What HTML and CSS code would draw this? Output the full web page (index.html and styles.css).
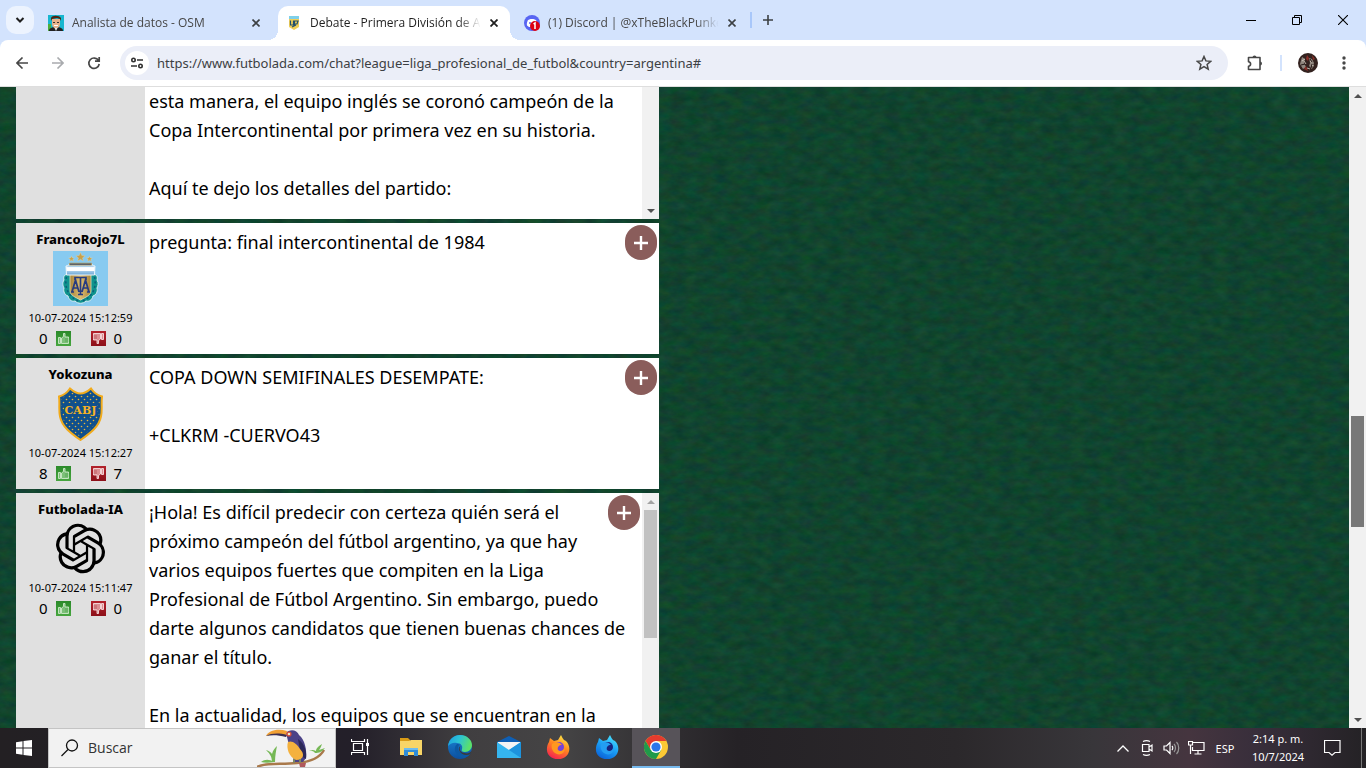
FILE: index.html
```html
<!DOCTYPE html>
<html lang="es">
<head>
<meta charset="utf-8">
<title>Debate - Primera División de Argentina</title>
<link rel="stylesheet" href="styles.css">
</head>
<body>
<svg class="defs" aria-hidden="true">
  <defs>
    <linearGradient id="gThumbUp" x2="0" y2="1"><stop offset="0" stop-color="#2b8a2a"/><stop offset="1" stop-color="#47a63f"/></linearGradient>
    <linearGradient id="gThumbDown" x2="0" y2="1"><stop offset="0" stop-color="#b3222c"/><stop offset="1" stop-color="#8c1019"/></linearGradient>
    <linearGradient id="gGold" x2="1"><stop offset="0" stop-color="#a8843a"/><stop offset=".5" stop-color="#dcbd70"/><stop offset="1" stop-color="#a8843a"/></linearGradient>
    <linearGradient id="gSky" x2="0" y2="1"><stop offset="0" stop-color="#cfe4f3"/><stop offset=".3" stop-color="#a4cbe8"/><stop offset=".32" stop-color="#fff"/><stop offset=".6" stop-color="#fff"/><stop offset=".62" stop-color="#a9cfec"/><stop offset="1" stop-color="#6aa5d4"/></linearGradient>
    <linearGradient id="gEdgeA" x2="1" y2=".3"><stop offset="0" stop-color="#1b9de2"/><stop offset=".5" stop-color="#2cc3d5"/><stop offset="1" stop-color="#5be06a"/></linearGradient>
    <linearGradient id="gEdgeB" x2="0" y2="1"><stop offset="0" stop-color="#1b86d6"/><stop offset="1" stop-color="#0c4f9e"/></linearGradient>
    <linearGradient id="gFox" x1=".8" x2=".3" y2="1"><stop offset="0" stop-color="#fff04a"/><stop offset=".45" stop-color="#ff8a1f"/><stop offset="1" stop-color="#f5214f"/></linearGradient>
    <linearGradient id="gFoxBlue" x1=".8" x2=".3" y2="1"><stop offset="0" stop-color="#4ee8ff"/><stop offset=".5" stop-color="#1ba0f5"/><stop offset="1" stop-color="#0a62d8"/></linearGradient>
    <pattern id="dots" width="6" height="6" patternUnits="userSpaceOnUse"><circle cx="1.500" cy="1.500" r=".8" fill="#e8b63a"/><circle cx="4.500" cy="4.500" r=".8" fill="#e8b63a"/></pattern>
    <filter id="turf" x="0" y="0" width="100%" height="100%" color-interpolation-filters="sRGB">
      <feTurbulence type="fractalNoise" baseFrequency=".07 .13" numOctaves="4" seed="8"/>
      <feColorMatrix values=".10 0 0 0 .015  0 .12 0 0 .205  0 0 .10 0 .130  0 0 0 0 1"/>
    </filter>
    <symbol id="up" viewBox="0 0 15 15"><path fill="url(#gThumbUp)" d="M0 0h15v15H0z"/><path fill="#7cc078" stroke="#cfeacb" stroke-width=".9" d="M2.500 6.500h2v6h-2zM5.500 7l2-1.500V2.500h1.500v3.500h3.500v6.500h-7z"/><path stroke="#4b9e48" stroke-width=".7" d="M9 8h3.500M9 10h3.500"/></symbol>
    <symbol id="down" viewBox="0 0 15 15"><path fill="url(#gThumbDown)" d="M0 0h15v15H0z"/><path fill="#dc8f93" stroke="#f7dedf" stroke-width=".9" d="M10.500 2.500h2v6h-2zM9.500 8l-2 1.500v3H6V9H2.500V2.500h7z"/><path stroke="#b04950" stroke-width=".7" d="M2.500 5H6M2.500 7H6"/></symbol>
  </defs>
</svg>

<header class="tabstrip">
  <button class="tab-search" aria-label="Buscar pestañas"><svg width="10" height="8" viewBox="0 0 10 8"><path d="M1.500 2L5 5.500 8.500 2" fill="none" stroke="#1f1f1f" stroke-width="2"/></svg></button>
  <nav class="tabs" aria-label="Pestañas">
    <div class="tab">
      <svg class="fav" viewBox="0 0 16 16"><path fill="#17b6cf" d="M0 0h16v16H0z"/><path fill="#4cae3c" d="M0 9h3v7H0z"/><path fill="#222" d="M1 16c0-3 3-4 7-4s7 1 7 4z"/><path fill="#e9e9e9" d="M6 12h4l-2 4z"/><path fill="#e9b28b" d="M4 4h8v5c0 3-2 4-4 4s-4-1-4-4z"/><path fill="#4d2413" d="M3 6V3c1-3 8-3 10 0v3l-1-2-3-1-5 1z"/><path fill="#333" d="M5 7h2v1H5zM9 7h2v1H9z"/><path stroke="#fff" d="M6 10.500h4"/></svg>
      <a class="tab-title" href="#">Analista de datos - OSM</a>
      <button class="tab-close" aria-label="Cerrar"><svg width="8" height="8" viewBox="0 0 8 8"><path d="M.5.5l7 7m0-7l-7 7" stroke="#3c4043" stroke-width="1.600"/></svg></button>
    </div>
    <div class="tab active">
      <svg class="fav" viewBox="0 0 16 16"><path fill="#7fd0ea" d="M3 1h10v3H3z"/><path fill="#f2cf57" d="M3 4h10v8l-5 3-5-3z"/><path fill="none" stroke="#24506b" stroke-width="1.200" d="M4.500 5.500v4.500h3V5.500M8.500 11V6H12L11 9H9M6 12l4-2"/></svg>
      <a class="tab-title" href="#">Debate - Primera División de Ar</a>
      <button class="tab-close" aria-label="Cerrar"><svg width="8" height="8" viewBox="0 0 8 8"><path d="M.5.5l7 7m0-7l-7 7" stroke="#1f1f1f" stroke-width="1.800"/></svg></button>
    </div>
    <div class="tab">
      <svg class="fav" viewBox="0 0 16 16"><circle cx="8" cy="8" r="8" fill="#5865f2"/><path fill="#fff" d="M4 5c2-1.500 6-1.500 8 0 1 2 1.500 4 1 5.500L11 12H5l-2-1.500C2.500 9 3 7 4 5z"/><circle cx="6" cy="8" r="1" fill="#5865f2"/><circle cx="11" cy="11" r="5" fill="#dc0014"/><path fill="none" stroke="#fff" stroke-width="1.500" d="M9.500 9l1.500-1v6"/></svg>
      <a class="tab-title" href="#">(1) Discord | @xTheBlackPunked</a>
      <button class="tab-close" aria-label="Cerrar"><svg width="8" height="8" viewBox="0 0 8 8"><path d="M.5.5l7 7m0-7l-7 7" stroke="#3c4043" stroke-width="1.600"/></svg></button>
    </div>
  </nav>
  <span class="tab-sep"></span>
  <button class="new-tab" aria-label="Nueva pestaña"><svg width="10" height="10" viewBox="0 0 10 10"><path d="M5 0v10M0 5h10" stroke="#3c4043" stroke-width="1.600"/></svg></button>
  <div class="window-controls">
    <button aria-label="Minimizar"><svg width="10" height="10" viewBox="0 0 10 10"><path d="M0 5.500h10" stroke="#000"/></svg></button>
    <button aria-label="Restaurar"><svg width="10" height="10" viewBox="0 0 10 10"><path d="M.5 2.500h7v7h-7zM2.500 2.500v-2h7v7h-2" fill="none" stroke="#000"/></svg></button>
    <button aria-label="Cerrar ventana"><svg width="10" height="10" viewBox="0 0 10 10"><path d="M0 0l10 10M10 0L0 10" stroke="#000" stroke-width="1.100"/></svg></button>
  </div>
</header>

<div class="toolbar-bg">
<div class="toolbar">
  <button class="tool" aria-label="Atrás"><svg width="12" height="12" viewBox="0 0 12 12"><path d="M6.500.5L1 6l5.500 5.500M1 6h11" fill="none" stroke="#474747" stroke-width="1.600"/></svg></button>
  <button class="tool" aria-label="Adelante"><svg width="12" height="12" viewBox="0 0 12 12"><path d="M5.500.5L11 6l-5.500 5.500M11 6H0" fill="none" stroke="#a9abae" stroke-width="1.600"/></svg></button>
  <button class="tool" aria-label="Recargar"><svg width="14" height="14" viewBox="0 0 14 14"><path d="M11.500 4.500A5.200 5.200 0 1 0 12.200 8M12.200 1v4.200H8" fill="none" stroke="#474747" stroke-width="1.700"/></svg></button>
  <div class="omnibox">
    <button class="site-info" aria-label="Información del sitio"><svg width="12" height="12" viewBox="0 0 12 12"><g fill="none" stroke="#303030" stroke-width="1.600"><circle cx="2.500" cy="3" r="1.700"/><path d="M6 3h6M0 9h6"/><circle cx="9.500" cy="9" r="1.700"/></g></svg></button>
    <input class="url" aria-label="Dirección" value="https://www.futbolada.com/chat?league=liga_profesional_de_futbol&amp;country=argentina#">
    <button class="star" aria-label="Marcador"><svg width="16" height="16" viewBox="0 0 16 16"><path d="M8 1.500l1.900 4.400 4.800.4-3.600 3.200 1.100 4.700L8 11.700l-4.200 2.500 1.100-4.700L1.300 6.300l4.800-.4z" fill="none" stroke="#474747" stroke-width="1.500"/></svg></button>
  </div>
  <button class="puzzle" aria-label="Extensiones"><svg width="18" height="18" viewBox="0 0 18 18"><path d="M2.500 3.500h11.500v12H2.500v-3.300c2.800-.3 2.800-4.100 0-4.400z" fill="none" stroke="#474747" stroke-width="1.600" stroke-linejoin="round"/><path fill="#474747" d="M6.500 3.500a2 2 0 0 1 4 0zM14 7.500a2 2 0 0 1 0 4z"/></svg></button>
  <span class="tool-sep"></span>
  <button class="avatar" aria-label="Perfil"><svg width="20" height="20" viewBox="0 0 20 20"><circle cx="10" cy="10" r="10" fill="#33221f"/><path fill="#8f867e" d="M4 4l3 2-1 4 2 4-3 2-3-5zM11 5l3 1 2 4-2 6-3-3 1-3z"/><path fill="#8b2e27" d="M9 2l2 3-1 3-2-2zM14 2l3 4-2 1zM8 13l2 5-4-2z"/><path stroke="#ddd4c8" stroke-width=".8" d="M6 8l2 3M12 8l2 1M9 15l3 1M4 8l3-2M13 12l3 1"/><path stroke="#221513" d="M3 12l4-1M12 6l2 3M14 11l-1 4"/></svg></button>
  <button class="menu" aria-label="Menú"><svg width="4" height="14" viewBox="0 0 4 14" fill="#474747"><circle cx="2" cy="2" r="1.700"/><circle cx="2" cy="7" r="1.700"/><circle cx="2" cy="12" r="1.700"/></svg></button>
</div>
</div>

<div class="viewport">
  <main class="page">
    <svg class="turf" aria-hidden="true"><rect width="100%" height="100%" filter="url(#turf)"/></svg>
    <section class="feed">
      <article class="post first">
        <aside class="author"></aside>
        <div class="body"><p>esta manera, el equipo inglés se coronó campeón de la<br>Copa Intercontinental por primera vez en su historia.</p><p>Aquí te dejo los detalles del partido:</p></div>
        <div class="scroll"><i class="thumb-space"></i><i class="arrow down"></i></div>
      </article>

      <article class="post">
        <aside class="author">
          <h2>FrancoRojo7L</h2>
          <svg class="crest" viewBox="0 0 55 55"><path fill="#87caf0" d="M0 0h55v55H0z"/><g fill="#c9a047" stroke="#e3d3a8" stroke-width=".4"><path d="M27.500 1.500l1.300 3 3.200.3-2.500 2.100.8 3.100-2.800-1.700-2.800 1.700.8-3.100L23 4.800l3.200-.3zM18.500 5l.8 1.900 2 .1-1.500 1.300.5 2-1.800-1.100-1.800 1.100.5-2L15.700 7l2-.1zM36.500 5l.8 1.900 2 .1-1.500 1.300.5 2-1.800-1.100-1.800 1.100.5-2-1.500-1.300 2-.1z"/></g><path fill="#0e938d" stroke="#d9edf4" d="M16 23c-5 0-6 3-5 6-2 3-1 6 0 8-1 4 1 7 4 8 1 4 4 6 7 5 3 3 8 3 11 0 3 1 6-1 7-5 3-1 5-4 4-8 1-2 2-5 0-8 1-3 0-6-5-6z"/><g fill="none" stroke="#0a5f78" stroke-width="1.500" stroke-dasharray="2 2.500"><path d="M13.500 26c-2 8 0 19 12 24M41.500 26c2 8 0 19-12 24"/></g><path fill="url(#gGold)" stroke="#e4dcbd" stroke-width=".8" d="M17 23h21v17c0 4-5 6-10.500 9C22 46 17 44 17 40z"/><path fill="url(#gSky)" stroke="#eef6fb" d="M16 13h23c0 1 1 2 3 2l-.5 9h-28L13 15c2 0 3-1 3-2z"/><path fill="#233f78" stroke="#b99a50" stroke-width=".8" d="M16.500 12.200h22v1.800h-22z"/><g fill="none" stroke="#263b80" stroke-width="1.700"><path d="M19 41l3.500-12L26 41M20 37h5M29 41l3.500-12L36 41M30 37h5M22 29v-2.500h11V29M27.500 27v16M25 43.500h5M18 41h3M34 41h3"/></g></svg>
          <time>10-07-2024 15:12:59</time>
          <div class="votes"><span>0</span><button aria-label="Me gusta"><svg><use href="#up"/></svg></button><button class="no" aria-label="No me gusta"><svg><use href="#down"/></svg></button><span>0</span></div>
        </aside>
        <div class="body"><p>pregunta: final intercontinental de 1984</p></div>
        <button class="plus" aria-label="Responder"><svg width="16" height="16" viewBox="0 0 16 16"><path d="M8 1v14M1 8h14" stroke="#fff" stroke-width="2.400"/></svg></button>
      </article>

      <article class="post">
        <aside class="author">
          <h2>Yokozuna</h2>
          <svg class="crest" viewBox="0 0 55 55"><path fill="#10508c" stroke="#f1ab1c" stroke-width="2" d="M17 2.500c4 3.500 8 5 10.500 5S34 6 38 2.500c3 4.500 7 7 11 8-1 7 .5 13-1 20-2 10-10 16-20.500 23.500C17 46.500 9 40.500 7 30.500c-1.500-7 0-13-1-20 4-1 8-3.500 11-8z"/><path fill="url(#dots)" d="M17 5c4 3 8 4.500 10.500 4.500S34 8 38 5c3 4 6 6 9 7-1 6 .5 12-1 18-2 8-9 14-18.500 21C18 44 11 38 9 30c-1.500-6 0-12-1-18 3-1 6-3 9-7z"/><path fill="#10508c" d="M11 17h33v13H11z"/><text class="club" x="27.500" y="28" text-anchor="middle">CABJ</text></svg>
          <time>10-07-2024 15:12:27</time>
          <div class="votes"><span>8</span><button aria-label="Me gusta"><svg><use href="#up"/></svg></button><button class="no" aria-label="No me gusta"><svg><use href="#down"/></svg></button><span>7</span></div>
        </aside>
        <div class="body"><p>COPA DOWN SEMIFINALES DESEMPATE:</p><p>+CLKRM -CUERVO43</p></div>
        <button class="plus" aria-label="Responder"><svg width="16" height="16" viewBox="0 0 16 16"><path d="M8 1v14M1 8h14" stroke="#fff" stroke-width="2.400"/></svg></button>
      </article>

      <article class="post last">
        <aside class="author">
          <h2>Futbolada-IA</h2>
          <svg class="crest" viewBox="-1.300 -1.300 26.600 26.600"><path d="M22.282 9.821a5.985 5.985 0 0 0-.516-4.910 6.046 6.046 0 0 0-6.510-2.900A6.065 6.065 0 0 0 4.981 4.182a5.985 5.985 0 0 0-3.998 2.900 6.046 6.046 0 0 0 .743 7.097 5.980 5.980 0 0 0 .510 4.911 6.051 6.051 0 0 0 6.515 2.900A5.985 5.985 0 0 0 13.260 24a6.056 6.056 0 0 0 5.772-4.206 5.990 5.990 0 0 0 3.998-2.900 6.056 6.056 0 0 0-.747-7.073zM13.260 22.430a4.476 4.476 0 0 1-2.876-1.040l.141-.081 4.779-2.758a.795.795 0 0 0 .393-.681v-6.737l2.020 1.169a.071.071 0 0 1 .038.052v5.583a4.504 4.504 0 0 1-4.495 4.494zM3.600 18.304a4.471 4.471 0 0 1-.535-3.014l.142.085 4.783 2.759a.771.771 0 0 0 .780 0l5.843-3.369v2.332a.080.080 0 0 1-.033.062L9.740 19.950a4.499 4.499 0 0 1-6.140-1.646zM2.341 7.896a4.485 4.485 0 0 1 2.365-1.973V11.600a.766.766 0 0 0 .388.677l5.814 3.354-2.020 1.169a.076.076 0 0 1-.071 0l-4.830-2.787A4.504 4.504 0 0 1 2.341 7.872zm16.597 3.855l-5.834-3.387 2.016-1.164a.076.076 0 0 1 .071 0l4.830 2.791a4.494 4.494 0 0 1-.677 8.104v-5.677a.790.790 0 0 0-.406-.667zm2.010-3.023l-.141-.085-4.774-2.782a.776.776 0 0 0-.785 0L9.409 9.230V6.897a.066.066 0 0 1 .028-.061l4.830-2.787a4.499 4.499 0 0 1 6.681 4.660zM8.307 12.863l-2.020-1.164a.080.080 0 0 1-.038-.057V6.075a4.499 4.499 0 0 1 7.376-3.454l-.142.081-4.778 2.758a.795.795 0 0 0-.393.681zm1.097-2.366l2.602-1.500 2.607 1.500v3l-2.597 1.500-2.607-1.500z"/></svg>
          <time>10-07-2024 15:11:47</time>
          <div class="votes"><span>0</span><button aria-label="Me gusta"><svg><use href="#up"/></svg></button><button class="no" aria-label="No me gusta"><svg><use href="#down"/></svg></button><span>0</span></div>
        </aside>
        <div class="body"><p>¡Hola! Es difícil predecir con certeza quién será el<br>próximo campeón del fútbol argentino, ya que hay<br>varios equipos fuertes que compiten en la Liga<br>Profesional de Fútbol Argentino. Sin embargo, puedo<br>darte algunos candidatos que tienen buenas chances de<br>ganar el título.</p><p>En la actualidad, los equipos que se encuentran en la</p></div>
        <div class="scroll"><i class="arrow up faded"></i><i class="thumb-inner"></i></div>
        <button class="plus beside-scroll" aria-label="Responder"><svg width="16" height="16" viewBox="0 0 16 16"><path d="M8 1v14M1 8h14" stroke="#fff" stroke-width="2.400"/></svg></button>
      </article>
    </section>
  </main>
  <div class="scroll page-scroll"><i class="arrow up"></i><div class="track"><i class="before"></i><i class="thumb-page"></i><i class="after"></i></div><i class="arrow down"></i></div>
</div>

<footer class="taskbar">
  <button class="start" aria-label="Inicio"><svg width="16" height="16" viewBox="0 0 16 16" fill="#fff"><path d="M0 2.200L6.500 1.300v6.200H0zM7.500 1.100L16 0v7.500H7.500zM0 8.500h6.500v6.200L0 13.800zM7.500 8.500H16V16l-8.500-1.100z"/></svg></button>
  <label class="search">
    <svg width="18" height="18" viewBox="0 0 18 18"><circle cx="11" cy="6.500" r="5.500" fill="none" stroke="#111" stroke-width="1.300"/><path d="M7 10.500L.5 17" stroke="#111" stroke-width="1.300"/></svg>
    <input type="search" aria-label="Buscar" placeholder="Buscar">
    <svg class="toucan" width="70" height="38" viewBox="0 0 70 38"><path d="M0 38c10-5 24-2 40-4 12-1 22-4 27-13" fill="none" stroke="#a9794b" stroke-width="2.500"/><path d="M15 33c0-6-3-9-6-12 3 1 5 2 6 4 1-4 3-6 5-8-1 5-2 10-2 16zM4 33c4-3 8-3 13 0-5 1-9 1-13 0zM59 22c0-3 3-5 6-7-1 3-2 5-3 6l6-2c-3 4-6 5-10 5-2-3-6-2-6-2s3-2 7 0z" fill="#76b856"/><path fill="#4b4287" d="M29 4c3-4 11-4 13 2 6 5 8 15 7 23l-3 4h-8l-4-9z"/><path fill="#2c2858" d="M41 10c7 5 9 13 8 20l-5-3z"/><path fill="#f4b13e" d="M31 13c4-2 9 2 12 7 5 5 4 11-4 11-7-3-10-12-8-18z"/><path fill="#f1a033" d="M30 2C20-1 11 2 9 7c6-2 13-2 20 0z"/><path fill="#3b2f52" d="M9 7c6-3 13-3 21-1l-1 2C21 6 15 6 9 7z"/><circle cx="32" cy="5" r="2.600" fill="#d34a35"/><circle cx="32" cy="5" r="1.300" fill="#eee7d0"/><path fill="#b0585c" d="M42 34h7l-1 4h-5z"/><path stroke="#7e8765" stroke-width="2" d="M37 30v4M43 30v4"/></svg>
  </label>
  <nav class="apps" aria-label="Aplicaciones">
    <button class="task-view" aria-label="Vista de tareas"><svg width="18" height="16" viewBox="0 0 18 16"><path d="M2.500 4.500h9v7h-9zM.5 0v2.500h13V0M.5 16v-2.500h13V16M16.500 0v16" fill="none" stroke="#fff" stroke-width="1.200"/><path fill="#fff" d="M15 4h3v3h-3z"/></svg></button>
    <button aria-label="Explorador"><svg width="22" height="18" viewBox="0 0 22 18"><path fill="#d99b16" d="M0 0h8l2 2v3H0z"/><path fill="#f8d567" d="M0 3h9l2-1h11v15H0z"/><path fill="#2f8bd6" d="M4 18v-8h14v8h-4v-4H8v4z"/><path fill="#6ebced" d="M4 10h14v2H4z"/></svg></button>
    <button aria-label="Edge"><svg width="24" height="24" viewBox="0 0 24 24"><circle cx="12" cy="12" r="12" fill="url(#gEdgeB)"/><path fill="url(#gEdgeA)" d="M0 11C1 4 6 0 12 0c7 0 12 5 12 10 0 4-3 7-7 7-3 0-4-1-3-3 1-3-1-6-5-6-4-1-7 1-9 3z"/><path fill="#0c59a4" d="M9 9c-4 3-3 12 7 14 3-1 6-3 7-5-7 3-13 0-13-5 0-2 1-3 2-3-1-1-2-1-3-1z"/><path fill="#3a393b" d="M12.500 11c-2 3 0 7 4 7 3 1 5 0 7-2l-1 3c-4 2-9 1-11-3-1-2-1-4 1-5z"/></svg></button>
    <button aria-label="Correo"><svg width="24" height="22" viewBox="0 0 24 22"><path fill="#0f5fb4" d="M0 6l12-6 12 6v4H0z"/><path fill="#f4f4f4" d="M1 6h22v8H1z"/><path fill="#35b5ef" d="M0 6l12 8 12-8v16H0z"/><path fill="#1d93dd" d="M24 6v16L12 14z"/></svg></button>
    <button aria-label="Firefox"><svg width="24" height="24" viewBox="0 0 24 24"><path fill="url(#gFox)" d="M3 7l1-4 4 3 4-1 3-5c1 2 2 4 3 5l2 1c4 4 4 9 2 13-4 7-16 7-20 0-2-4-1-9 1-12z"/><circle cx="13" cy="12" r="5" fill="#7543d8"/><path fill="#ff981f" d="M6 9c4-3 8-2 10 1-3 0-5 2-4 5 2 2 5 1 7-2 0 6-6 8-10 5-3-2-4-6-3-9z"/></svg></button>
    <button aria-label="Firefox Developer Edition"><svg width="24" height="24" viewBox="0 0 24 24"><path fill="url(#gFoxBlue)" d="M3 7l1-4 4 3 4-1 3-5c1 2 2 4 3 5l2 1c4 4 4 9 2 13-4 7-16 7-20 0-2-4-1-9 1-12z"/><circle cx="13" cy="12" r="5" fill="#17237e"/><path fill="#239df2" d="M6 9c4-3 8-2 10 1-3 0-5 2-4 5 2 2 5 1 7-2 0 6-6 8-10 5-3-2-4-6-3-9z"/></svg></button>
    <button class="current" aria-label="Chrome"><svg width="24" height="24" viewBox="0 0 24 24"><circle cx="12" cy="12" r="12" fill="#fcc934"/><path fill="#e33b2e" d="M1.600 6A12 12 0 0 1 22.400 6H12l-5.200 9z"/><path fill="#209a4b" d="M1.600 6A12 12 0 0 0 12 24l5.200-9H6.800z"/><circle cx="12" cy="12" r="6" fill="#fff"/><circle cx="12" cy="12" r="4.600" fill="#2c76e8"/></svg></button>
  </nav>
  <div class="tray">
    <button aria-label="Mostrar iconos ocultos"><svg width="12" height="7" viewBox="0 0 12 7"><path d="M.5 6.500L6 1l5.500 5.500" fill="none" stroke="#fff" stroke-width="1.300"/></svg></button>
    <button aria-label="Cámara"><svg width="12" height="16" viewBox="0 0 12 16"><path d="M1.500 4.500h6.500v7H1.500zM8 7l3-2v6L8 9M2 1.500c2-1 5-1 7 0M2 14.500c2 1 5 1 7 0" fill="none" stroke="#fff" stroke-width="1.200"/></svg></button>
    <button aria-label="Volumen"><svg width="17" height="14" viewBox="0 0 17 14" fill="none" stroke="#fff" stroke-width="1.200"><path d="M1 5h2.500L7 1.500v11L3.500 9H1zM9 5c1 1 1 3 0 4"/><path stroke="#999" d="M11 3c2 2 2 6 0 8M13.500 1c3 3 3 9 0 12"/></svg></button>
    <button class="net" aria-label="Red"><svg width="17" height="14" viewBox="0 0 17 14"><path d="M5 1.500h11v8H4.500V6M10 9.500v3M6.500 13h7M.5.500h4v3.500h-4zM2.500 4v9" fill="none" stroke="#fff" stroke-width="1.200"/></svg></button>
    <button class="lang">ESP</button>
    <button class="clock">2:14 p. m.<br>10/7/2024</button>
    <button class="notes" aria-label="Notificaciones"><svg width="17" height="16" viewBox="0 0 17 16"><path d="M.5.500h15.500v12H11l-3 2.700-3-2.700H.5z" fill="none" stroke="#fff" stroke-width="1.200"/></svg></button>
    <span class="peek"></span>
  </div>
</footer>
</body>
</html>
```

FILE: styles.css
```css
* { box-sizing: border-box; }

body {
  margin: 0;
  height: 100vh;
  display: flex;
  flex-direction: column;
  overflow: hidden;
  font-family: "Noto Sans", "Open Sans", sans-serif;
  color: #000;
}

button {
  padding: 0;
  border: 0;
  background: none;
  font: inherit;
  color: inherit;
  display: flex;
  align-items: center;
  justify-content: center;
}

svg { display: block; flex: none; }
.defs { position: absolute; width: 0; height: 0; }

/* Tab strip */
.tabstrip {
  flex: none;
  height: 40px;
  display: flex;
  align-items: center;
  padding-left: 6px;
  background: #d3e3fd;
}
.tab-search { width: 28px; height: 28px; border-radius: 10px; background: #ecf3fe; }
.tabs { display: flex; align-self: flex-end; gap: 6px; margin-left: 6px; }
.tab {
  width: 232px;
  height: 34px;
  display: flex;
  align-items: center;
  padding: 0 8px;
  position: relative;
  border-radius: 10px 10px 0 0;
}
.tab.active { background: #fff; }
.tab.active::before,
.tab.active::after {
  content: "";
  position: absolute;
  bottom: 0;
  width: 10px;
  height: 10px;
}
.tab.active::before { left: -10px; background: radial-gradient(circle at 0 0, #d3e3fd 10px, #fff 10px); }
.tab.active::after { right: -10px; background: radial-gradient(circle at 100% 0, #d3e3fd 10px, #fff 10px); }
.fav { width: 16px; height: 16px; }
.tab-title {
  flex: 1;
  min-width: 0;
  margin-left: 8px;
  overflow: hidden;
  white-space: nowrap;
  font: 12px/18px "Open Sans", sans-serif;
  color: #474747;
  text-decoration: none;
  mask-image: linear-gradient(90deg, #000 84%, transparent 97%);
}
.active .tab-title { color: #1f1f1f; }
.tab-close { width: 16px; height: 16px; }
.tab-sep { width: 2px; height: 16px; margin-left: 2px; background: #a8c7fa; }
.new-tab { width: 28px; height: 28px; margin-left: 2px; }
.window-controls { display: flex; align-self: stretch; margin-left: auto; }
.window-controls button { width: 46px; }

/* Toolbar */
.toolbar-bg { flex: none; background: #d3e3fd; }
.toolbar {
  height: 47px;
  display: flex;
  align-items: center;
  padding: 0 8px 0 4px;
  background: #fff;
  border-radius: 8px 8px 0 0;
  border-bottom: 1px solid #dedede;
}
.tool { width: 36px; height: 34px; }
.omnibox {
  flex: 1;
  height: 34px;
  display: flex;
  align-items: center;
  margin-left: 8px;
  padding: 0 12px 0 5px;
  border-radius: 17px;
  background: #ebeef8;
}
.site-info { width: 24px; height: 24px; border-radius: 50%; background: #fff; }
.url {
  flex: 1;
  min-width: 0;
  margin-left: 8px;
  padding: 0;
  border: 0;
  background: none;
  font: 13px/20px "Noto Sans", sans-serif;
  color: #3c4043;
}
.star { width: 24px; height: 24px; }
.puzzle { width: 28px; height: 28px; margin-left: 13px; }
.tool-sep { width: 2px; height: 16px; margin: 0 16px 0 11px; background: #d3e3fd; }
.avatar { width: 20px; height: 20px; }
.menu { width: 28px; height: 28px; margin-left: 12px; }

/* Forum page */
.viewport { flex: 1; min-height: 0; display: flex; }
.page {
  flex: 1;
  position: relative;
  display: grid;
  grid-template-columns: 643fr 690fr;
  padding-left: 16px;
  overflow: hidden;
  background: #11452f;
}
.turf { position: absolute; inset: 0; width: 100%; height: 100%; }
.feed {
  position: relative;
  display: flex;
  flex-direction: column;
  gap: 4px;
  min-width: 0;
}
.post {
  position: relative;
  flex: none;
  height: 131px;
  display: flex;
  background: #fff;
}
.post.first { height: 132px; }
.post.last { height: 262px; }
.author {
  flex: none;
  width: 129px;
  padding-top: 6px;
  display: flex;
  flex-direction: column;
  align-items: center;
  background: #e0e0e0;
}
.author h2 { margin: 0 0 2px; font-size: 13px; line-height: 20px; font-weight: 800; }
.crest { width: 55px; height: 55px; }
.club { font: bold 11px "DejaVu Serif", serif; fill: #f5b225; }
.author time { margin-top: 4px; font-size: 11px; line-height: 16px; white-space: nowrap; }
.votes { display: flex; align-items: center; gap: 8px; margin-top: 3px; font-size: 15px; line-height: 18px; }
.votes svg { width: 15px; height: 15px; }
.votes .no { margin-left: 12px; }
.body {
  flex: 1;
  min-width: 0;
  padding: 5px 0 0 4px;
  overflow: hidden;
  font-size: 18px;
  line-height: 29px;
  white-space: nowrap;
}
.first .body { padding-top: 0; }
.body p { margin: 0 0 29px; }
.plus {
  position: absolute;
  top: 2px;
  right: 2px;
  width: 32px;
  height: 35px;
  border-radius: 16px;
  background: #8a5d5b;
}
.plus.beside-scroll { right: 19px; }

/* Scrollbars */
.scroll {
  flex: none;
  width: 17px;
  display: flex;
  flex-direction: column;
  align-items: center;
  background: #f1f1f1;
}
.arrow { flex: none; width: 17px; height: 17px; display: grid; place-items: center; }
.arrow::before { content: ""; border: 4px solid transparent; }
.arrow.up::before { border-top-width: 0; border-bottom-color: #505050; }
.arrow.down::before { border-bottom-width: 0; border-top-color: #505050; }
.arrow.faded::before { border-bottom-color: #a3a3a3; }
.thumb-space { flex: 1; }
.thumb-inner { width: 13px; height: 128px; background: #c1c1c1; }
.track { flex: 1; display: flex; flex-direction: column; }
.before { flex: 312; }
.thumb-page { flex: 111; width: 13px; background: #787878; }
.after { flex: 184; }

/* Taskbar */
.taskbar {
  flex: none;
  height: 40px;
  display: flex;
  background: linear-gradient(90deg, #232023 0, #231f29 26%, #403e40 34%, #454445 41%, #302e31 49%, #252226 54%, #2b282b 70%, #38363a 80%, #45353f 87%, #382e3b 92%, #242225 100%);
  color: #fff;
}
.start { width: 48px; }
.search {
  width: 288px;
  display: flex;
  align-items: center;
  padding-left: 12px;
  background: #f2f2f2;
  border: 1px solid #c4c4c4;
}
.search input {
  flex: 1;
  min-width: 0;
  margin-left: 9px;
  padding: 0;
  border: 0;
  background: none;
  font: 14px/20px "Open Sans", sans-serif;
}
.search input::placeholder { color: #333; opacity: 1; }
.toucan { margin-right: 8px; }
.apps { display: flex; gap: 1px; }
.apps button { width: 48px; border-bottom: 2px solid transparent; }
.apps .task-view { margin-right: 2px; }
.apps .current { background: #575359; border-bottom-color: #76b9ed; }
.tray { display: flex; margin-left: auto; font-size: 12px; }
.tray button { width: 24px; }
.tray .net { width: 26px; }
.tray .lang { width: 32px; font-size: 11px; }
.tray .clock { width: 74px; font-size: 11px; line-height: 18px; text-align: center; white-space: nowrap; }
.tray .notes { width: 34px; margin-right: 12px; }
.peek { width: 5px; border-left: 1px solid #777; }
```
